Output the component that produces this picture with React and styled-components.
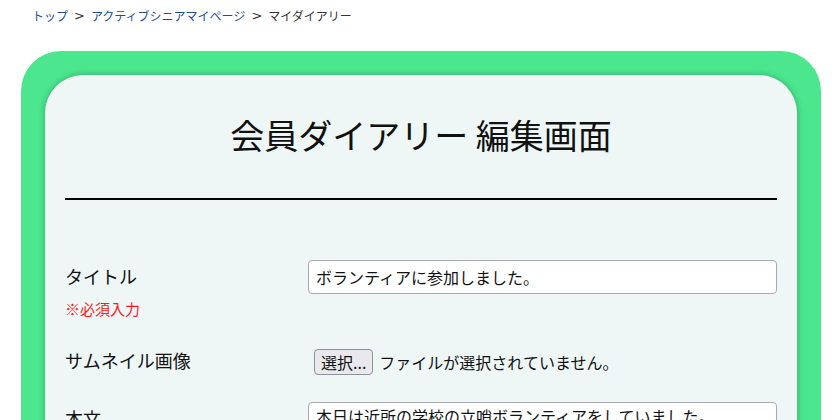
import styled, { createGlobalStyle } from "styled-components";

const GlobalStyle = createGlobalStyle`
    body {
        margin: 0;
        background: #ffffff;
        font-family: "Noto Sans CJK JP", "Noto Sans", sans-serif;
        color: #111111;
    }
`

const Page = styled.div`
    padding: 0 19px 40px 21px;
`

const Breadcrumb = styled.nav`
    display: flex;
    align-items: center;
    padding: 7px 0 0 11px;
    font-size: 12px;
    line-height: 18px;
    color: #333333;
`

const Crumb = styled.a`
    color: ${(p) => (p.$current ? "#333333" : "#1a4f95")};
    text-decoration: none;
`

const Sep = styled.span`
    margin: 0 6px;
    font-family: "DejaVu Sans", sans-serif;
    font-size: 13px;
    color: #333333;
`

const Frame = styled.div`
    margin-top: 26px;
    width: 800px;
    box-sizing: border-box;
    padding: 24px;
    background: #4be68e;
    border-radius: 40px;
`

const Card = styled.div`
    background: #eef7f6;
    border-radius: 38px;
    padding: 39px 20px 60px;
    box-shadow: 0 0 6px rgba(0, 0, 0, 0.28);
    min-height: 600px;
`

const Title = styled.h1`
    margin: 0;
    text-align: center;
    font-size: 34px;
    line-height: 41px;
    font-weight: 400;
    color: #111111;
`

const Rule = styled.hr`
    margin: 43px 0 0;
    border: none;
    height: 2px;
    background: #000000;
`

const Form = styled.form`
    margin-top: 60px;
    display: flex;
    flex-direction: column;
    gap: 27px;
`

const Row = styled.div`
    display: grid;
    grid-template-columns: 243px 1fr;
    align-items: start;
`

const Label = styled.div`
    margin-top: ${(p) => p.$offset || 0}px;
    font-size: 18px;
    line-height: 27px;
    color: #111111;
`

const Required = styled.div`
    margin-top: 8px;
    font-size: 15px;
    line-height: 22px;
    color: #ff1a1a;
`

const TextInput = styled.input`
    box-sizing: border-box;
    width: 100%;
    height: 34px;
    padding: 0 7px;
    border: 1px solid #a9a9ad;
    border-radius: 4px;
    background: #ffffff;
    font-family: inherit;
    font-size: 16px;
    color: #111111;
`

const FileRow = styled.div`
    display: flex;
    align-items: center;
    gap: 6px;
    margin: 2px 0 0 6px;
    font-size: 16px;
`

const FileButton = styled.button`
    box-sizing: border-box;
    height: 26px;
    padding: 0 6px;
    border: 1px solid #8f8f9d;
    border-radius: 4px;
    background: #e9e9ed;
    font-family: inherit;
    font-size: 16px;
    color: #111111;
`

const TextArea = styled.textarea`
    box-sizing: border-box;
    width: 100%;
    height: 180px;
    padding: 3px 7px;
    border: 1px solid #a9a9ad;
    border-radius: 4px;
    background: #ffffff;
    font-family: inherit;
    font-size: 16px;
    line-height: 20px;
    color: #111111;
    resize: none;
`

const App = () => {
    return (<>
        <GlobalStyle />
        <Page>
            <Breadcrumb>
                <Crumb href="#">トップ</Crumb>
                <Sep>&gt;</Sep>
                <Crumb href="#">アクティブシニアマイページ</Crumb>
                <Sep>&gt;</Sep>
                <Crumb $current>マイダイアリー</Crumb>
            </Breadcrumb>
            <Frame>
                <Card>
                    <Title>会員ダイアリー 編集画面</Title>
                    <Rule />
                    <Form>
                        <Row>
                            <div>
                                <Label $offset={3}>タイトル</Label>
                                <Required>※必須入力</Required>
                            </div>
                            <TextInput type="text" defaultValue="ボランティアに参加しました。" />
                        </Row>
                        <Row>
                            <Label>サムネイル画像</Label>
                            <FileRow>
                                <FileButton type="button">選択...</FileButton>
                                <span>ファイルが選択されていません。</span>
                            </FileRow>
                        </Row>
                        <Row>
                            <Label $offset={3}>本文</Label>
                            <TextArea defaultValue="本日は近所の学校の立哨ボランティアをしていました。" />
                        </Row>
                    </Form>
                </Card>
            </Frame>
        </Page>
    </>)
}

export default App
